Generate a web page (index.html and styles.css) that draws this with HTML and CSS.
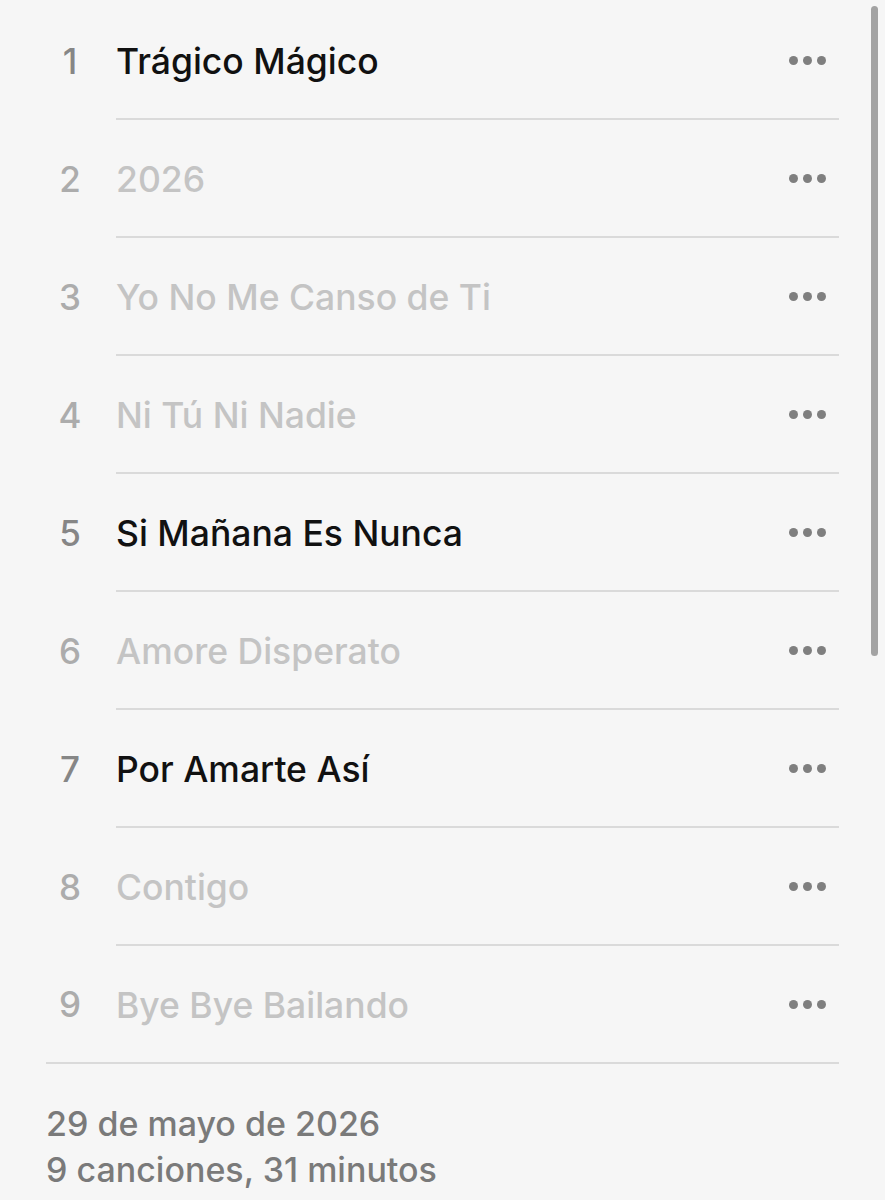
FILE: index.html
```html
<!DOCTYPE html>
<html lang="es">
<head>
    <meta charset="UTF-8">
    <meta name="viewport" content="width=device-width, initial-scale=1.0">
    <title>Lista de canciones</title>
    <link rel="stylesheet" href="styles.css">
</head>
<body>
    <div class="scrollbar"></div>
    <div class="container">
        <ul class="track-list">
            <li class="track">
                <span class="track-num">1</span>
                <div class="track-body">
                    <span class="track-title">Trágico Mágico</span>
                    <span class="more"><i></i><i></i><i></i></span>
                </div>
            </li>
            <li class="track dim">
                <span class="track-num">2</span>
                <div class="track-body">
                    <span class="track-title">2026</span>
                    <span class="more"><i></i><i></i><i></i></span>
                </div>
            </li>
            <li class="track dim">
                <span class="track-num">3</span>
                <div class="track-body">
                    <span class="track-title">Yo No Me Canso de Ti</span>
                    <span class="more"><i></i><i></i><i></i></span>
                </div>
            </li>
            <li class="track dim">
                <span class="track-num">4</span>
                <div class="track-body">
                    <span class="track-title">Ni Tú Ni Nadie</span>
                    <span class="more"><i></i><i></i><i></i></span>
                </div>
            </li>
            <li class="track">
                <span class="track-num">5</span>
                <div class="track-body">
                    <span class="track-title">Si Mañana Es Nunca</span>
                    <span class="more"><i></i><i></i><i></i></span>
                </div>
            </li>
            <li class="track dim">
                <span class="track-num">6</span>
                <div class="track-body">
                    <span class="track-title">Amore Disperato</span>
                    <span class="more"><i></i><i></i><i></i></span>
                </div>
            </li>
            <li class="track">
                <span class="track-num">7</span>
                <div class="track-body">
                    <span class="track-title">Por Amarte Así</span>
                    <span class="more"><i></i><i></i><i></i></span>
                </div>
            </li>
            <li class="track dim">
                <span class="track-num">8</span>
                <div class="track-body">
                    <span class="track-title">Contigo</span>
                    <span class="more"><i></i><i></i><i></i></span>
                </div>
            </li>
            <li class="track dim last">
                <span class="track-num">9</span>
                <div class="track-body">
                    <span class="track-title">Bye Bye Bailando</span>
                    <span class="more"><i></i><i></i><i></i></span>
                </div>
            </li>
        </ul>

        <div class="album-info">
            <p>29 de mayo de 2026</p>
            <p>9 canciones, 31 minutos</p>
        </div>
    </div>
</body>
</html>
```

FILE: styles.css
```css
* {
    margin: 0;
    padding: 0;
    box-sizing: border-box;
}
body {
    font-family: Inter, "Noto Sans", sans-serif;
    background-color: #f6f6f6;
    overflow: hidden;
}
.container {
    padding: 2px 46px 0 46px;
}
.scrollbar {
    position: absolute;
    top: 6px;
    left: 871px;
    width: 7px;
    height: 650px;
    border-radius: 4px;
    background-color: #a3a3a3;
}
.track-list {
    list-style-type: none;
}
.track {
    display: flex;
    height: 118px;
}
.track-num {
    width: 70px;
    padding-right: 22px;
    display: flex;
    align-items: center;
    justify-content: center;
    font-size: 35px;
    font-weight: 500;
    color: #868686;
}
.track-body {
    flex: 1;
    display: flex;
    align-items: center;
    justify-content: space-between;
    border-bottom: 2px solid #dadada;
    padding-right: 13px;
}
.track.last {
    border-bottom: 2px solid #dadada;
}
.track.last .track-body {
    border-bottom: none;
}
.track-title {
    font-size: 35.5px;
    font-weight: 500;
    color: #111111;
    padding-top: 2px;
}
.track.dim .track-title {
    color: #c4c4c4;
}
.track.dim .track-num {
    color: #acacac;
}
.more {
    display: flex;
    gap: 5px;
}
.more i {
    width: 9px;
    height: 9px;
    border-radius: 50%;
    background-color: #7f7f7f;
}
.album-info {
    padding-top: 37px;
    font-size: 34px;
    font-weight: 500;
    color: #7a7a7a;
    line-height: 46px;
}
```
